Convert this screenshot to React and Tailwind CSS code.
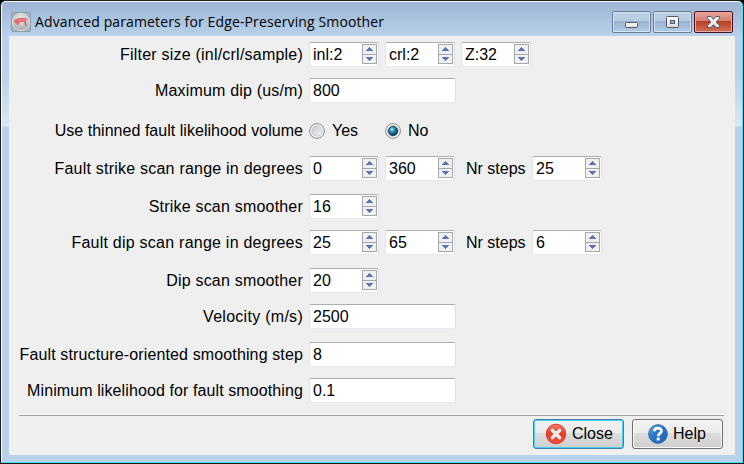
import React from "react";

function Arrow({ up }) {
  return (
    <svg width="7" height="4" viewBox="0 0 7 4" shapeRendering="crispEdges">
      {up ? (
        <path d="M3 0h1v1h1v1h1v1h1v1H0V3h1V2h1V1h1z" fill="#5d72b8" />
      ) : (
        <path d="M0 0h7v1H6v1H5v1H4v1H3V3H2V2H1V1H0z" fill="#5d72b8" />
      )}
    </svg>
  );
}

function Field({ value, wide, spin }) {
  return (
    <div
      className={
        "flex h-[25px] shrink-0 items-center justify-between rounded-[2px] border border-t-[#abadb3] border-r-[#dbdfe6] border-b-[#e3e9ef] border-l-[#e2e3ea] bg-white pl-[3px] pr-px " +
        (wide ? "w-[147px]" : "w-[70px]")
      }
    >
      <span className="leading-[20px]">{value}</span>
      {spin && (
        <div className="mt-px flex h-[20px] w-[15px] flex-col self-start border border-[#a5a5aa] bg-[#f0f0f0]">
          <div className="flex h-[10px] items-start justify-center border-b border-[#a5a5aa] pt-[2px]">
            <Arrow up />
          </div>
          <div className="flex h-[8px] items-start justify-center pt-[2px]">
            <Arrow />
          </div>
        </div>
      )}
    </div>
  );
}

function Row({ label, className, children }) {
  return (
    <div className={"flex h-[25px] items-center " + className}>
      <div className="w-[294px] shrink-0 whitespace-nowrap text-right leading-[20px]">{label}</div>
      <div className="ml-[6px] flex items-center gap-[6px] tracking-normal">{children}</div>
    </div>
  );
}

function Radio({ on, label }) {
  return (
    <div className="flex w-[70px] items-center gap-[7px]">
      <svg width="16" height="16" viewBox="0 0 16 16">
        <defs>
          <radialGradient id="radioBall" cx="0.38" cy="0.32" r="0.7">
            <stop offset="0" stopColor="#b9f1fc" />
            <stop offset="0.35" stopColor="#2a9bc4" />
            <stop offset="1" stopColor="#062c4c" />
          </radialGradient>
          <linearGradient id="radioWell" x1="0" y1="0" x2="1" y2="1">
            <stop offset="0" stopColor="#c4c8cc" />
            <stop offset="1" stopColor="#f7f7f7" />
          </linearGradient>
        </defs>
        <circle cx="8" cy="8" r="7.4" fill="#f6f6f6" stroke="#898989" />
        <circle cx="8" cy="8" r="5.2" fill="url(#radioWell)" stroke={on ? "#9aa7b2" : "#bfc2c6"} strokeWidth="0.8" />
        {on && <circle cx="8" cy="8" r="4.6" fill="url(#radioBall)" stroke="#123850" strokeWidth="0.8" />}
      </svg>
      <span className="leading-[20px]">{label}</span>
    </div>
  );
}

function NrSteps({ value }) {
  return (
    <div className="ml-[5px] flex items-center">
      <span className="w-[66px] whitespace-nowrap leading-[20px]">Nr steps</span>
      <Field value={value} spin />
    </div>
  );
}

function CaptionButtons() {
  return (
    <svg width="122" height="22" viewBox="0 0 122 22">
      <defs>
        <linearGradient id="capBlue" x1="0" y1="0" x2="0" y2="1">
          <stop offset="0" stopColor="#bfd3e8" />
          <stop offset="0.44" stopColor="#b4cbe2" />
          <stop offset="0.45" stopColor="#98b2ce" />
          <stop offset="1" stopColor="#b3cce6" />
        </linearGradient>
        <linearGradient id="capRed" x1="0" y1="0" x2="0" y2="1">
          <stop offset="0" stopColor="#e6a69b" />
          <stop offset="0.44" stopColor="#d28172" />
          <stop offset="0.45" stopColor="#b83c22" />
          <stop offset="1" stopColor="#d0755d" />
        </linearGradient>
        <linearGradient id="capGlyph" x1="0" y1="0" x2="0" y2="1">
          <stop offset="0" stopColor="#ffffff" />
          <stop offset="1" stopColor="#dcdcdc" />
        </linearGradient>
      </defs>
      {[0.5, 41.5].map((x) => (
        <g key={x}>
          <rect x={x} y="0.5" width="38" height="21" rx="1.5" fill="url(#capBlue)" stroke="#667e9b" />
          <rect x={x + 1} y="1.5" width="36" height="19" rx="0.5" fill="none" stroke="#d3e2f1" />
        </g>
      ))}
      <rect x="82.5" y="0.5" width="38" height="21" rx="1.5" fill="url(#capRed)" stroke="#4a1220" />
      <rect x="83.5" y="1.5" width="36" height="19" rx="0.5" fill="none" stroke="#e8aaa0" />
      <rect x="13.5" y="11.5" width="12" height="5" rx="1" fill="url(#capGlyph)" stroke="#535666" />
      <rect x="54.5" y="5.5" width="12" height="11" rx="1" fill="url(#capGlyph)" stroke="#535666" />
      <rect x="58.5" y="9.5" width="4" height="3" fill="#9bb2cc" stroke="#535666" />
      <path
        d="M95.5 5.5H99L101.5 8.3 104 5.5H107.5V7.5L104.2 11 107.5 14.5V16.5H104L101.5 13.7 99 16.5H95.5V14.5L98.8 11 95.5 7.5z"
        fill="url(#capGlyph)"
        stroke="#535666"
        strokeLinejoin="round"
      />
    </svg>
  );
}

function AppIcon() {
  return (
    <svg width="20" height="20" viewBox="0 0 20 20">
      <defs>
        <radialGradient id="appDisc" cx="0.5" cy="0.3" r="0.7">
          <stop offset="0" stopColor="#ededed" />
          <stop offset="1" stopColor="#aaa9ac" />
        </radialGradient>
      </defs>
      <rect x="0.5" y="0.5" width="19" height="19" rx="1" fill="#a5b3c1" stroke="#8d9dad" />
      <circle cx="10" cy="10" r="8.6" fill="url(#appDisc)" stroke="#dde1e5" />
      <path d="M3.2 9.6L6.5 7.4 11 6.4 15.8 7.6M6 9.4L15 9M6.5 9.4L4.6 11.2M13.6 9L15 13.6M8 9.5L6.5 13" fill="none" stroke="#e0575b" strokeWidth="1.5" strokeLinejoin="round" />
      <path d="M6.5 7.4L15 7.2 14.5 9.2 6 9.6z" fill="#e67a7c" />
    </svg>
  );
}

function CloseIcon() {
  return (
    <svg width="22" height="22" viewBox="0 0 22 22">
      <defs>
        <linearGradient id="closeFill" x1="0" y1="0" x2="0" y2="1">
          <stop offset="0" stopColor="#f27a67" />
          <stop offset="0.5" stopColor="#e53d2c" />
          <stop offset="1" stopColor="#ee5138" />
        </linearGradient>
      </defs>
      <circle cx="11" cy="11" r="9.8" fill="url(#closeFill)" stroke="#dc4232" />
      <path d="M7.4 7.4l7.2 7.2M14.6 7.4l-7.2 7.2" stroke="#fff" strokeWidth="3.4" strokeLinecap="round" />
      <path d="M7.4 7.4l7.2 7.2M14.6 7.4l-7.2 7.2" stroke="#f6d6d0" strokeWidth="1.2" strokeLinecap="round" />
    </svg>
  );
}

function HelpIcon() {
  return (
    <svg width="20" height="20" viewBox="0 0 20 20">
      <defs>
        <linearGradient id="helpFill" x1="0" y1="0" x2="1" y2="1">
          <stop offset="0" stopColor="#7bb4e6" />
          <stop offset="0.4" stopColor="#2d76c6" />
          <stop offset="1" stopColor="#1e5fb4" />
        </linearGradient>
      </defs>
      <circle cx="10" cy="10" r="9.3" fill="url(#helpFill)" stroke="#2c67ae" />
      <path d="M6.4 7.3C6.4 2.9 13.6 3 13.4 7.2 13.3 9.6 10.2 9.4 10.2 12.2" fill="none" stroke="#fff" strokeWidth="2.8" />
      <rect x="8.7" y="13.5" width="3" height="3" rx="0.5" fill="#fff" />
    </svg>
  );
}

export default function App() {
  return (
    <div className="h-[464px] w-[744px] overflow-hidden bg-black font-['Liberation_Sans',Arial,sans-serif] text-[16px] text-black">
      <div className="h-full w-full overflow-hidden rounded-t-[6px] border border-[#1c1c20] bg-[#4bdcf5] pr-px pb-px">
        <div className="flex h-full w-full flex-col rounded-t-[5px] border-t border-l border-white bg-[linear-gradient(to_bottom,#9ab4d2_0px,#aac3df_17px,#b9d1ea_34px,#bad2ea_75px,#dbe7f5_124px,#b9d1ea_125px,#b9d1ea_100%)]">
          <header className="flex h-[34px] shrink-0 items-start pl-[9px] pr-[8px]">
            <div className="mt-[10px]">
              <AppIcon />
            </div>
            <h1 className="mt-[10px] ml-[4px] flex-1 whitespace-nowrap font-['Open_Sans','Noto_Sans',sans-serif] text-[14px] leading-[20px] tracking-[0.125px]">
              Advanced parameters for Edge-Preserving Smoother
            </h1>
            <div className="mt-[9px]">
              <CaptionButtons />
            </div>
          </header>
          <main className="ml-[7px] h-[419px] w-[726px] bg-[#efefef] pt-[6px]">
            <Row label="Filter size (inl/crl/sample)" className="tracking-[0.22px]">
              <Field value="inl:2" spin />
              <Field value="crl:2" spin />
              <Field value="Z:32" spin />
            </Row>
            <Row label="Maximum dip (us/m)" className="mt-[11px] tracking-[0.17px]">
              <Field value="800" wide />
            </Row>
            <Row label="Use thinned fault likelihood volume" className="mt-[15px] tracking-[0.03px]">
              <Radio label="Yes" />
              <Radio label="No" on />
            </Row>
            <Row label="Fault strike scan range in degrees" className="mt-[13px] tracking-[0.22px]">
              <Field value="0" spin />
              <Field value="360" spin />
              <NrSteps value="25" />
            </Row>
            <Row label="Strike scan smoother" className="mt-[13px] tracking-[0.2px]">
              <Field value="16" spin />
            </Row>
            <Row label="Fault dip scan range in degrees" className="mt-[11px] tracking-[0.24px]">
              <Field value="25" spin />
              <Field value="65" spin />
              <NrSteps value="6" />
            </Row>
            <Row label="Dip scan smoother" className="mt-[13px] tracking-[0.2px]">
              <Field value="20" spin />
            </Row>
            <Row label="Velocity (m/s)" className="mt-[11px] tracking-[0.28px]">
              <Field value="2500" wide />
            </Row>
            <Row label="Fault structure-oriented smoothing step" className="mt-[13px] tracking-[0.13px]">
              <Field value="8" wide />
            </Row>
            <Row label="Minimum likelihood for fault smoothing" className="mt-[11px] tracking-[0.1px]">
              <Field value="0.1" wide />
            </Row>
            <div className="mt-[11px] ml-[10px] h-[2px] w-[705px] border-t border-b border-t-white border-b-[#a0a0a0]" />
            <div className="mt-[3px] flex justify-end gap-[8px] pr-[12px]">
              <button className="flex h-[30px] w-[91px] items-center rounded-[3px] border border-[#3c7fb1] bg-[linear-gradient(to_bottom,#f2f2f2_0%,#ebebeb_47%,#dddddd_48%,#cfcfcf_100%)] pl-[11px] shadow-[inset_0_0_0_1px_#48d0f2]">
                <CloseIcon />
                <span className="ml-[5px]">Close</span>
              </button>
              <button className="flex h-[30px] w-[91px] items-center rounded-[3px] border border-[#707070] bg-[linear-gradient(to_bottom,#f2f2f2_0%,#ebebeb_47%,#dddddd_48%,#cfcfcf_100%)] pl-[15px] shadow-[inset_0_0_0_1px_#fafafa]">
                <HelpIcon />
                <span className="ml-[5px]">Help</span>
              </button>
            </div>
          </main>
        </div>
      </div>
    </div>
  );
}
